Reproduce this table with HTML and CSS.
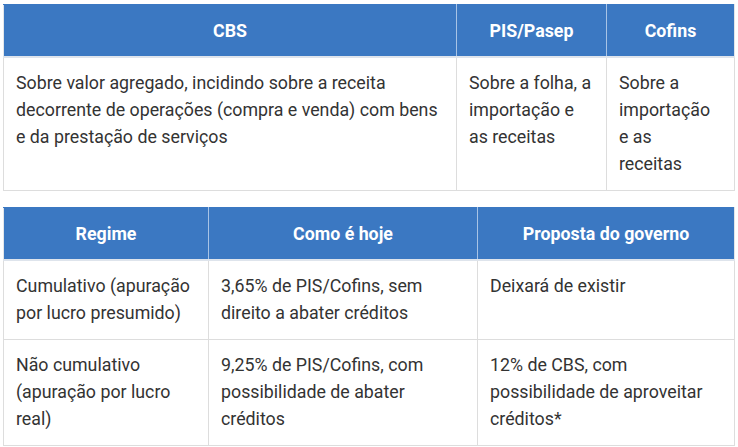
FILE: index.html
```html
<!DOCTYPE html>
<html lang="pt-BR">
<head>
<meta charset="utf-8">
<link rel="stylesheet" href="styles.css">
</head>
<body>
<div class="page">
  <table class="grid grid-a">
    <colgroup><col class="a1"><col class="a2"><col class="a3"></colgroup>
    <thead>
      <tr><th>CBS</th><th>PIS/Pasep</th><th>Cofins</th></tr>
    </thead>
    <tbody>
      <tr>
        <td>Sobre valor agregado, incidindo sobre a receita decorrente de operações (compra e venda) com bens e da prestação de serviços</td>
        <td>Sobre a folha, a importação e as receitas</td>
        <td class="narrow">Sobre a importação e as receitas</td>
      </tr>
    </tbody>
  </table>
  <table class="grid grid-b">
    <colgroup><col class="b1"><col class="b2"><col class="b3"></colgroup>
    <thead>
      <tr><th>Regime</th><th>Como é hoje</th><th>Proposta do governo</th></tr>
    </thead>
    <tbody>
      <tr>
        <td>Cumulativo (apuração por lucro presumido)</td>
        <td>3,65% de PIS/Cofins, sem direito a abater créditos</td>
        <td>Deixará de existir</td>
      </tr>
      <tr>
        <td>Não cumulativo (apuração por lucro real)</td>
        <td>9,25% de PIS/Cofins, com possibilidade de abater créditos</td>
        <td>12% de CBS, com possibilidade de aproveitar créditos*</td>
      </tr>
    </tbody>
  </table>
</div>
</body>
</html>
```
FILE: styles.css
```css
html, body {
  margin: 0;
  padding: 0;
  background: #ffffff;
}
.page {
  padding: 4px 0 0 3px;
  display: flex;
  flex-direction: column;
  gap: 16px;
  font-family: Roboto, "Noto Sans", Arial, sans-serif;
  font-size: 17.8px;
  color: #333333;
}
.grid {
  width: 731px;
  border-collapse: collapse;
  table-layout: fixed;
  line-height: 27px;
}
.grid th {
  background: #3b78c2;
  color: #ffffff;
  font-weight: 700;
  text-align: center;
  padding: 12px 12px;
  border: 1px solid #3b78c2;
  border-right-color: #a8c4e6;
  border-bottom: 2px solid #dee4ec;
}
.grid th:first-child {
  border-left-color: #e2e6ea;
}
.grid th:last-child {
  border-right-color: #e2e6ea;
}
.grid td {
  vertical-align: top;
  text-align: left;
  padding: 11px 14px 13px 12px;
  border: 1px solid #dddddd;
}
.grid td.narrow {
  padding-right: 20px;
}
.a1 { width: 453px; }
.a2 { width: 150px; }
.a3 { width: 128px; }
.b1 { width: 205px; }
.b2 { width: 269px; }
.b3 { width: 257px; }
```
